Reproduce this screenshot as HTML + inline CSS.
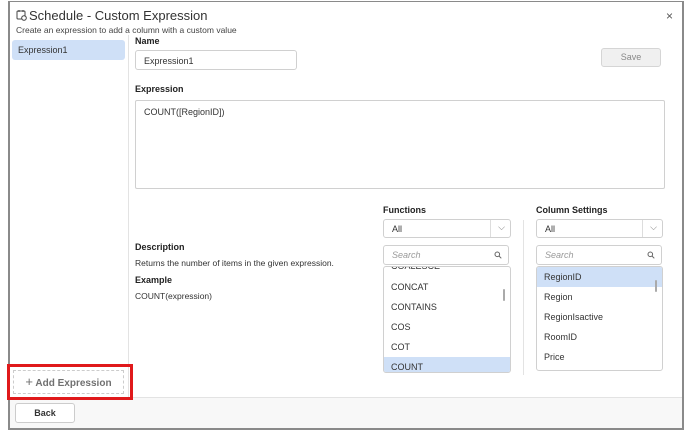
<!DOCTYPE html>
<html><head><style>
*{box-sizing:border-box;margin:0;padding:0}
body{width:685px;height:431px;background:#fff;font-family:"Liberation Sans",sans-serif;color:#333;position:relative;overflow:hidden}
.a{position:absolute}
.frame{left:8px;top:1px;width:676px;height:429px;border:2px solid #8a8a8a;border-top-width:1px}
.lbl{font-size:9px;font-weight:bold;color:#222}
.box{border:1px solid #d0d0d0;border-radius:3px;background:#fff}
.t{font-size:9px;color:#333}
.item{position:absolute;left:0;width:100%;height:20px;font-size:9px;color:#333;padding-left:7px;line-height:20px}
</style></head><body>
<div class="a frame"></div>
<svg class="a" style="left:16px;top:9px" width="11" height="12" viewBox="0 0 11 12"><rect x="1" y="2" width="8" height="8" rx="1" fill="none" stroke="#444" stroke-width="1"/><line x1="3" y1="1" x2="3" y2="3" stroke="#444"/><line x1="7" y1="1" x2="7" y2="3" stroke="#444"/><circle cx="8" cy="9" r="2.3" fill="#fff" stroke="#444"/></svg>
<div class="a" style="left:29px;top:8px;font-size:13px;color:#333">Schedule - Custom Expression</div>
<div class="a" style="left:16px;top:25px;font-size:8.5px;color:#444">Create an expression to add a column with a custom value</div>
<div class="a" style="left:666px;top:9px;font-size:12px;color:#555">×</div>
<div class="a" style="left:128px;top:35px;width:1px;height:362px;background:#e3e3e3"></div>
<div class="a" style="left:12px;top:40px;width:113px;height:20px;background:#cfe0f7;border-radius:3px;font-size:9px;color:#333;padding:5px 6px">Expression1</div>
<div class="a lbl" style="left:135px;top:36px">Name</div>
<div class="a box t" style="left:135px;top:50px;width:162px;height:20px;padding:5px 8px">Expression1</div>
<div class="a" style="left:601px;top:48px;width:60px;height:19px;background:#f0f0f0;border:1px solid #d5d5d5;border-radius:3px;font-size:9px;color:#888;text-align:center;line-height:17px">Save</div>
<div class="a lbl" style="left:135px;top:84px">Expression</div>
<div class="a box t" style="left:135px;top:100px;width:530px;height:89px;padding:6px 8px;border-radius:2px">COUNT([RegionID])</div>
<div class="a lbl" style="left:383px;top:205px">Functions</div>
<div class="a lbl" style="left:536px;top:205px">Column Settings</div>
<div class="a" style="left:523px;top:220px;width:1px;height:155px;background:#e3e3e3"></div>
<div class="a box t" style="left:383px;top:219px;width:128px;height:19px;padding:4px 8px">All<span style="position:absolute;left:106px;top:0;width:1px;height:17px;background:#ddd"></span><span style="position:absolute;right:5px;top:2px;color:#777">⌵</span></div>
<div class="a box t" style="left:536px;top:219px;width:127px;height:19px;padding:4px 8px">All<span style="position:absolute;left:105px;top:0;width:1px;height:17px;background:#ddd"></span><span style="position:absolute;right:5px;top:2px;color:#777">⌵</span></div>
<div class="a box" style="left:383px;top:245px;width:126px;height:20px;padding:4px 8px;font-size:9px;font-style:italic;color:#999">Search<svg style="position:absolute;right:6px;top:5px" width="8" height="8" viewBox="0 0 8 8"><circle cx="3.3" cy="3.3" r="2.3" fill="none" stroke="#666"/><line x1="5" y1="5" x2="7.3" y2="7.3" stroke="#666"/></svg></div>
<div class="a box" style="left:536px;top:245px;width:126px;height:20px;padding:4px 8px;font-size:9px;font-style:italic;color:#999">Search<svg style="position:absolute;right:6px;top:5px" width="8" height="8" viewBox="0 0 8 8"><circle cx="3.3" cy="3.3" r="2.3" fill="none" stroke="#666"/><line x1="5" y1="5" x2="7.3" y2="7.3" stroke="#666"/></svg></div>
<div class="a box" style="left:383px;top:266px;width:128px;height:107px;overflow:hidden">
<div class="item" style="top:-11px">COALESCE</div>
<div class="item" style="top:10px">CONCAT</div>
<div class="item" style="top:30px">CONTAINS</div>
<div class="item" style="top:50px">COS</div>
<div class="item" style="top:70px">COT</div>
<div class="item" style="top:90px;background:#cfe0f7">COUNT</div>
<div style="position:absolute;right:5px;top:22px;width:2px;height:12px;background:#aaa;border-radius:1px"></div>
</div>
<div class="a box" style="left:536px;top:266px;width:127px;height:105px;overflow:hidden">
<div class="item" style="top:0;background:#cfe0f7">RegionID</div>
<div class="item" style="top:20px">Region</div>
<div class="item" style="top:40px">RegionIsactive</div>
<div class="item" style="top:60px">RoomID</div>
<div class="item" style="top:80px">Price</div>
<div style="position:absolute;right:5px;top:13px;width:2px;height:12px;background:#aaa;border-radius:1px"></div>
</div>
<div class="a lbl" style="left:135px;top:242px">Description</div>
<div class="a" style="left:135px;top:258px;font-size:8.5px;color:#333">Returns the number of items in the given expression.</div>
<div class="a lbl" style="left:135px;top:275px">Example</div>
<div class="a" style="left:135px;top:291px;font-size:8.5px;color:#333">COUNT(expression)</div>
<div class="a" style="left:10px;top:397px;width:672px;height:31px;background:#f8f8f8;border-top:1px solid #e3e3e3"></div>
<div class="a" style="left:7px;top:364px;width:126px;height:36px;border:3px solid #e0191b"></div>
<div class="a" style="left:13px;top:370px;width:111px;height:24px;border:1px dashed #ccc;font-size:10px;font-weight:bold;color:#707070;text-align:center;line-height:22px;background:#fff"><span style="font-weight:normal;font-size:13px">+</span> Add Expression</div>
<div class="a" style="left:15px;top:403px;width:60px;height:20px;border:1px solid #ccc;border-radius:3px;background:#fff;font-size:9px;font-weight:bold;color:#333;text-align:center;line-height:18px">Back</div>
</body></html>
